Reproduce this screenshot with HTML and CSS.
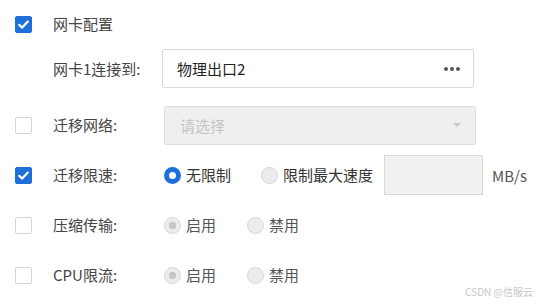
FILE: index.html
```html
<!DOCTYPE html>
<html lang="zh-CN">
<head>
<meta charset="utf-8">
<link rel="stylesheet" href="styles.css">
</head>
<body>
<div class="form">
  <div class="row row-first">
    <span class="cb checked"><svg viewBox="0 0 17 17" width="17" height="17"><path d="M4.2 8.8 L7.2 11.6 L12.8 5.6" fill="none" stroke="#fff" stroke-width="2.2" stroke-linecap="round" stroke-linejoin="round"/></svg></span>
    <span class="title">网卡配置</span>
  </div>
  <div class="row row-sub">
    <span class="cb-space"></span>
    <span class="label">网卡1连接到:</span>
    <div class="input">
      <span class="value">物理出口2</span>
      <span class="dots"><i></i><i></i><i></i></span>
    </div>
  </div>
  <div class="row row-gap">
    <span class="cb"></span>
    <span class="label">迁移网络:</span>
    <div class="select">
      <span class="placeholder">请选择</span>
      <span class="arrow"></span>
    </div>
  </div>
  <div class="row">
    <span class="cb checked"><svg viewBox="0 0 17 17" width="17" height="17"><path d="M4.2 8.8 L7.2 11.6 L12.8 5.6" fill="none" stroke="#fff" stroke-width="2.2" stroke-linecap="round" stroke-linejoin="round"/></svg></span>
    <span class="label">迁移限速:</span>
    <div class="radios">
      <span class="radio on"></span><span class="rtext">无限制</span>
      <span class="radio off wide"></span><span class="rtext">限制最大速度</span>
      <span class="speed"></span>
      <span class="unit">MB/s</span>
    </div>
  </div>
  <div class="row">
    <span class="cb"></span>
    <span class="label">压缩传输:</span>
    <div class="radios">
      <span class="radio dis-on"></span><span class="rtext dim">启用</span>
      <span class="radio off near"></span><span class="rtext dim">禁用</span>
    </div>
  </div>
  <div class="row">
    <span class="cb"></span>
    <span class="label">CPU限流:</span>
    <div class="radios">
      <span class="radio dis-on"></span><span class="rtext dim">启用</span>
      <span class="radio off near"></span><span class="rtext dim">禁用</span>
    </div>
  </div>
</div>
<div class="watermark">CSDN @信服云</div>
</body>
</html>
```
FILE: styles.css
```css
html, body {
  margin: 0;
  padding: 0;
  background: #fff;
}
body {
  width: 538px;
  height: 304px;
  position: relative;
  overflow: hidden;
  font-family: "Noto Sans CJK SC", "Noto Sans", sans-serif;
  font-size: 15px;
  color: #333;
}
.form {
  padding-left: 15px;
  display: flex;
  flex-direction: column;
}
.row {
  display: flex;
  align-items: center;
  height: 50px;
}
.row-first {
  height: 48px;
}
.row-sub {
  height: 41px;
}
.row-gap {
  margin-top: 11px;
}
.cb, .cb-space {
  width: 17px;
  height: 17px;
  flex: none;
  box-sizing: border-box;
  margin-right: 21px;
}
.cb {
  border: 1px solid #d4d4d4;
  border-radius: 2px;
  background: #fff;
  position: relative;
}
.cb.checked {
  background: #1f6fdb;
  border-color: #1f6fdb;
}
.cb svg {
  position: absolute;
  left: -1px;
  top: -1px;
}
.title {
  color: #444;
  line-height: 20px;
}
.label {
  width: 109px;
  flex: none;
  color: #444;
  line-height: 20px;
}
.input {
  width: 312px;
  height: 39px;
  box-sizing: border-box;
  border: 1px solid #d9d9d9;
  border-radius: 2px;
  display: flex;
  align-items: center;
  justify-content: space-between;
  padding: 0 13px 0 14px;
}
.value {
  color: #222;
}
.dots {
  display: flex;
  gap: 2px;
}
.dots i {
  width: 4px;
  height: 4px;
  border-radius: 50%;
  background: #555;
}
.select {
  width: 312px;
  height: 39px;
  margin-left: 2px;
  box-sizing: border-box;
  border: 1px solid #dedede;
  border-radius: 2px;
  background: #efefef;
  display: flex;
  align-items: center;
  justify-content: space-between;
  padding: 0 14px 0 15px;
}
.placeholder {
  color: #c4c4c4;
}
.arrow {
  width: 0;
  height: 0;
  border-left: 4px solid transparent;
  border-right: 4px solid transparent;
  border-top: 4px solid #c8c8c8;
}
.radios {
  display: flex;
  align-items: center;
  margin-left: 2px;
}
.radio {
  width: 17px;
  height: 17px;
  box-sizing: border-box;
  border-radius: 50%;
  flex: none;
  margin-right: 5px;
}
.radio.on {
  border: 5px solid #1f6fdb;
  background: #fff;
}
.radio.off {
  border: 1px solid #d6d6d6;
  background: #ececec;
}
.radio.dis-on {
  border: 1px solid #d6d6d6;
  background: radial-gradient(circle, #c6c6c6 0 3.5px, #ececec 4px);
}
.radio.wide {
  margin-left: 30px;
}
.radio.near {
  margin-left: 31px;
}
.rtext {
  color: #333;
  line-height: 20px;
}
.rtext.dim {
  color: #555;
}
.speed {
  width: 99px;
  height: 40px;
  box-sizing: border-box;
  border: 1px solid #d9d9d9;
  background: #f1f1f1;
  margin-left: 11px;
}
.unit {
  margin-left: 9px;
  color: #555;
}
.watermark {
  position: absolute;
  right: 5px;
  bottom: 5px;
  font-size: 10px;
  color: #c8c8c8;
  font-family: "Noto Sans CJK SC", sans-serif;
}
```
